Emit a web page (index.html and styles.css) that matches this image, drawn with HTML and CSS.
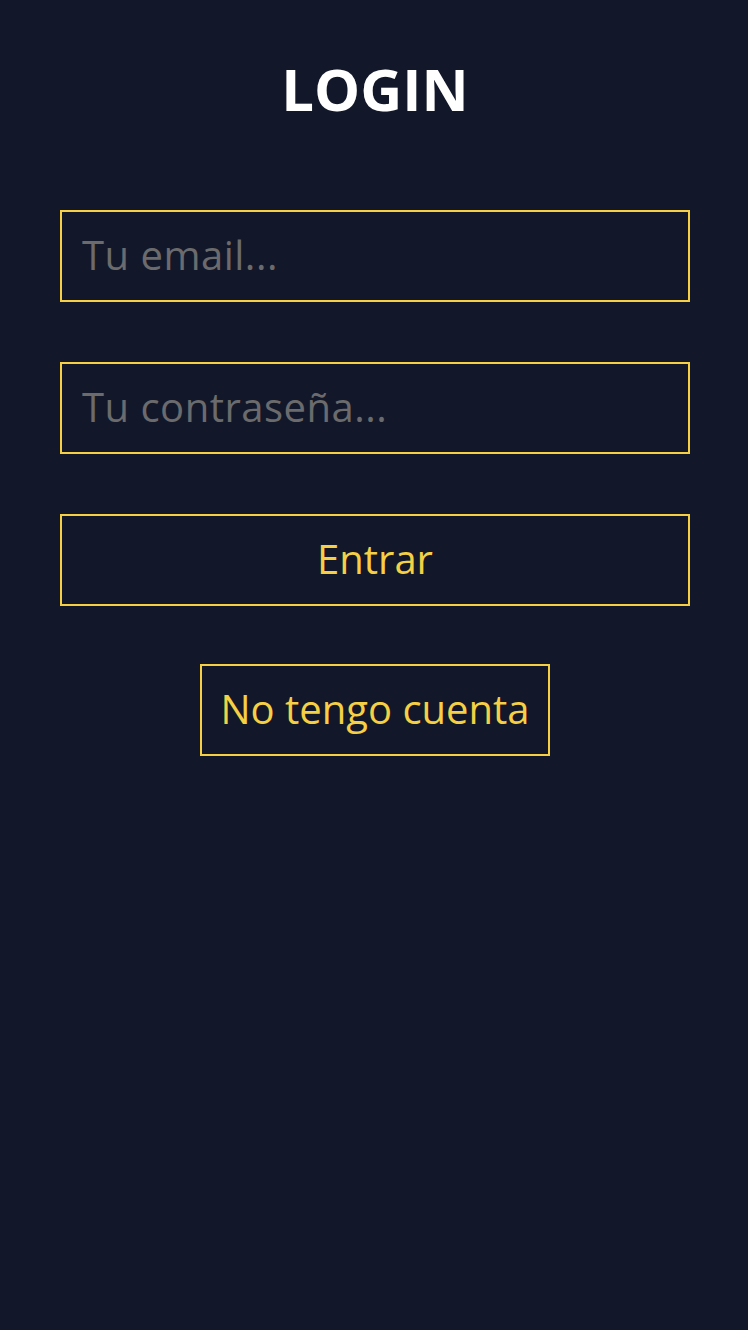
FILE: index.html
```html
<!DOCTYPE html>
<html lang="es">
<head>
<meta charset="utf-8">
<title>Login</title>
<link rel="stylesheet" href="styles.css">
</head>
<body>
<main class="page">
  <h1 class="title">LOGIN</h1>
  <form class="form">
    <input class="field" type="email" placeholder="Tu email...">
    <input class="field" type="password" placeholder="Tu contraseña...">
    <button class="btn btn-full" type="button">Entrar</button>
    <button class="btn btn-link" type="button">No tengo cuenta</button>
  </form>
</main>
</body>
</html>
```

FILE: styles.css
```css
html, body {
  margin: 0;
  padding: 0;
  background: #121829;
  min-height: 100%;
}
body {
  font-family: "Open Sans", "DejaVu Sans", sans-serif;
  height: 1330px;
}
.page {
  padding: 0 58px 0 60px;
  display: flex;
  flex-direction: column;
}
.title {
  margin: 52px 0 0 0;
  text-align: center;
  color: #ffffff;
  font-size: 58px;
  font-weight: 700;
  line-height: 74px;
  letter-spacing: 0;
}
.form {
  margin-top: 84px;
  display: flex;
  flex-direction: column;
  gap: 60px;
}
.field, .btn {
  box-sizing: border-box;
  height: 92px;
  border: 2px solid #f5cf44;
  background: transparent;
  font-family: inherit;
  font-size: 40px;
  outline: none;
}
.field {
  width: 100%;
  padding: 0 20px 4px;
  color: #ffffff;
}
.field::placeholder {
  color: #6b6b6d;
  letter-spacing: 0.5px;
}
.btn {
  color: #f5cf44;
  cursor: pointer;
  padding: 0 20px 4px;
  white-space: nowrap;
}
.btn-full {
  width: 100%;
}
.btn-link {
  align-self: center;
  margin-top: -2px;
  width: 350px;
  height: 92px;
  padding: 0 0 4px;
}
```
